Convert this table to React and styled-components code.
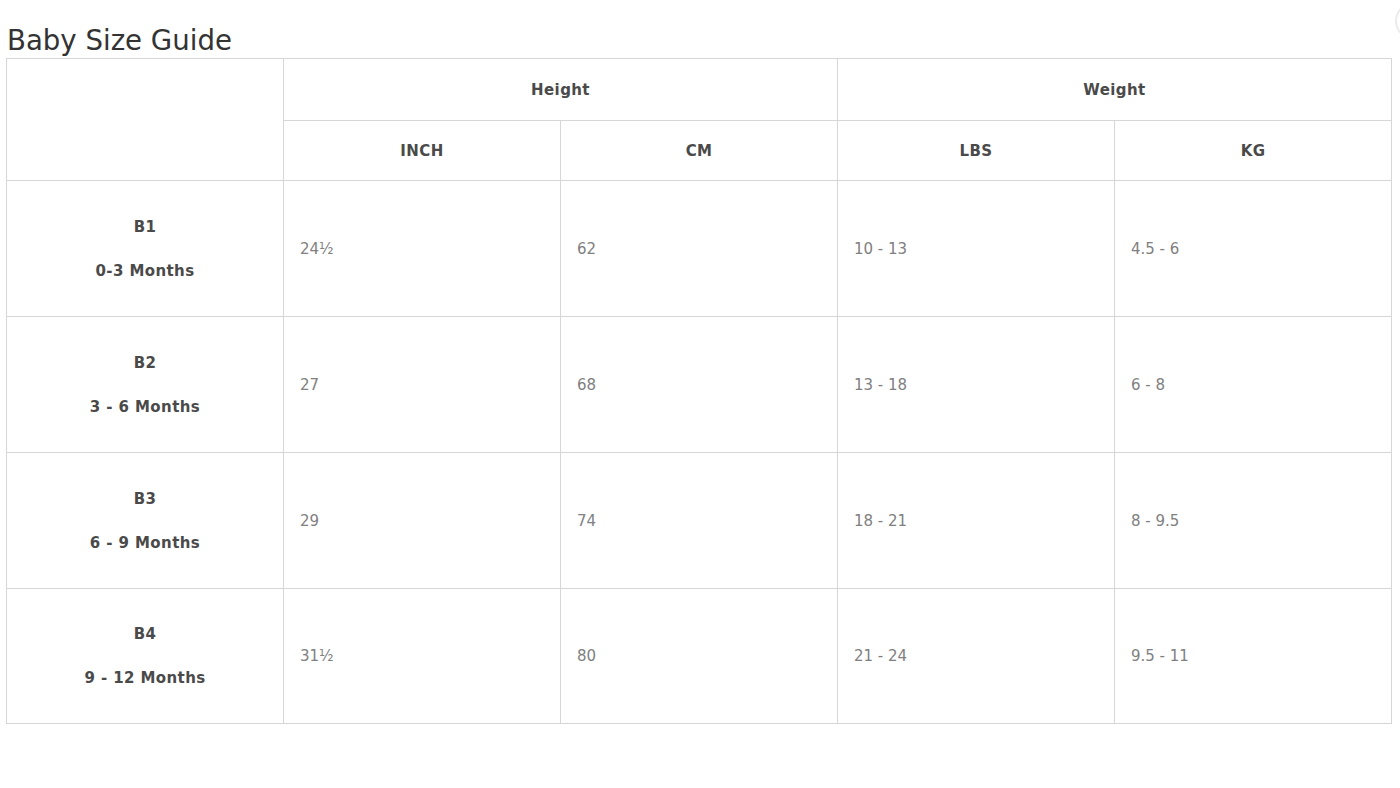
import React from 'react'
import styled, { createGlobalStyle } from 'styled-components'

const GlobalStyle = createGlobalStyle`
  html, body {
    margin: 0;
    padding: 0;
    background: #fff;
    overflow: hidden;
  }
  body {
    font-family: 'DejaVu Sans', 'Open Sans', sans-serif;
  }
`

const Page = styled.div`
  position: relative;
  width: 1400px;
  height: 788px;
  padding: 0 8px 0 6px;
  box-sizing: border-box;
`

const Title = styled.h2`
  margin: 0;
  padding: 25px 0 0 1px;
  height: 58px;
  box-sizing: border-box;
  font-size: 27.6px;
  font-weight: 400;
  line-height: 31px;
  color: #333;
`

const CloseRing = styled.div`
  position: absolute;
  top: 2px;
  left: 1395px;
  width: 34px;
  height: 34px;
  border-radius: 50%;
  border: 2px solid #ececec;
`

const Table = styled.table`
  width: 1386px;
  border-collapse: collapse;
  table-layout: fixed;
`

const HeadCell = styled.th`
  border: 1px solid #d6d6d6;
  height: ${p => p.$h}px;
  padding: 0;
  font-size: 15px;
  font-weight: 700;
  color: #4a4a4a;
  text-align: center;
  vertical-align: middle;
  letter-spacing: 0.4px;
`

const SizeCell = styled.td`
  border: 1px solid #d6d6d6;
  height: ${p => p.$h}px;
  padding: 0;
  text-align: center;
  vertical-align: middle;
`

const SizeLine = styled.p`
  margin: 0;
  font-size: 15px;
  font-weight: 700;
  color: #4a4a4a;
  line-height: 20px;
  letter-spacing: 0.4px;
  & + & {
    margin-top: 24px;
  }
`

const ValueCell = styled.td`
  border: 1px solid #d6d6d6;
  padding: 0 16px;
  font-size: 15px;
  font-weight: 400;
  color: #808080;
  vertical-align: middle;
`

const rows = [
  { size: 'B1', age: '0-3 Months', inch: '24½', cm: '62', lbs: '10 - 13', kg: '4.5 - 6' },
  { size: 'B2', age: '3 - 6 Months', inch: '27', cm: '68', lbs: '13 - 18', kg: '6 - 8' },
  { size: 'B3', age: '6 - 9 Months', inch: '29', cm: '74', lbs: '18 - 21', kg: '8 - 9.5' },
  { size: 'B4', age: '9 - 12 Months', inch: '31½', cm: '80', lbs: '21 - 24', kg: '9.5 - 11' },
]

export default function App() {
  return (
    <Page>
      <GlobalStyle />
      <CloseRing />
      <Title>Baby Size Guide</Title>
      <Table>
        <thead>
          <tr>
            <HeadCell $h={61} rowSpan={2} />
            <HeadCell $h={61} colSpan={2}>Height</HeadCell>
            <HeadCell $h={61} colSpan={2}>Weight</HeadCell>
          </tr>
          <tr>
            <HeadCell $h={59}>INCH</HeadCell>
            <HeadCell $h={59}>CM</HeadCell>
            <HeadCell $h={59}>LBS</HeadCell>
            <HeadCell $h={59}>KG</HeadCell>
          </tr>
        </thead>
        <tbody>
          {rows.map((r, i) => (
            <tr key={r.size}>
              <SizeCell $h={i === rows.length - 1 ? 134 : 135}>
                <SizeLine>{r.size}</SizeLine>
                <SizeLine>{r.age}</SizeLine>
              </SizeCell>
              <ValueCell>{r.inch}</ValueCell>
              <ValueCell>{r.cm}</ValueCell>
              <ValueCell>{r.lbs}</ValueCell>
              <ValueCell>{r.kg}</ValueCell>
            </tr>
          ))}
        </tbody>
      </Table>
    </Page>
  )
}
